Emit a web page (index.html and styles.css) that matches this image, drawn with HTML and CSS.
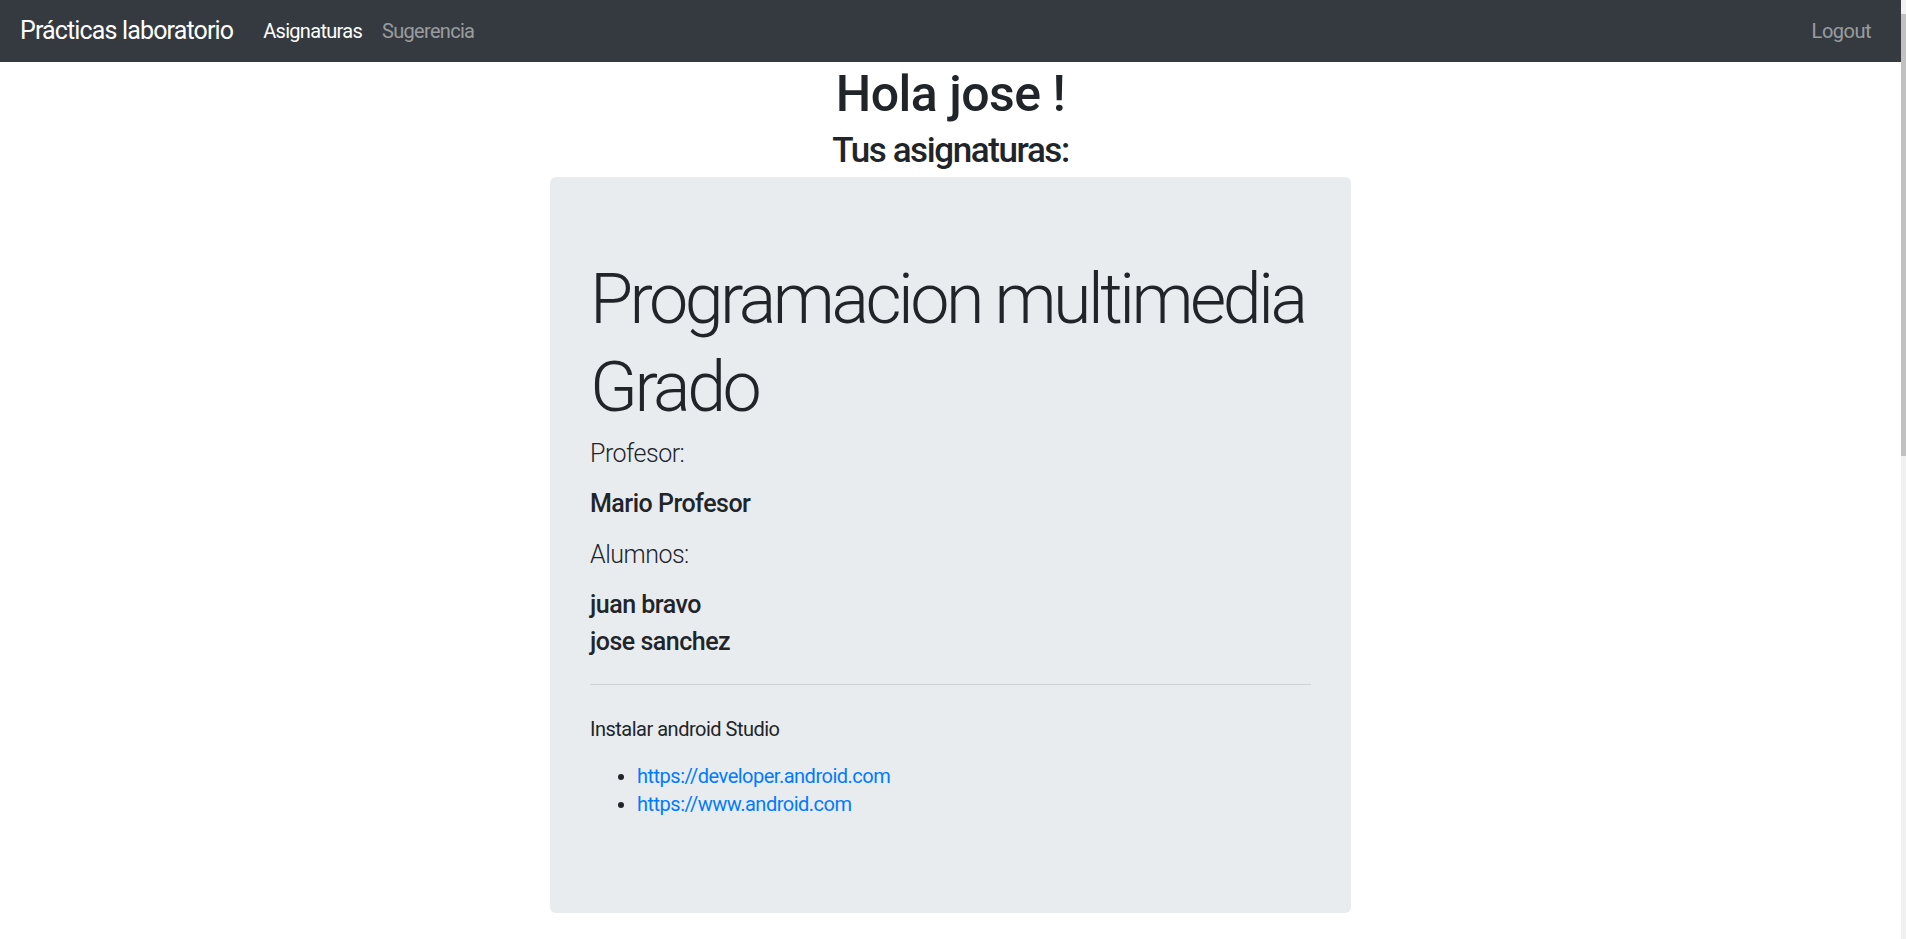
FILE: index.html
```html
<!DOCTYPE html>
<html lang="es">
<head>
<meta charset="utf-8">
<title>Prácticas laboratorio</title>
<link rel="stylesheet" href="styles.css">
</head>
<body>
<div class="app">
  <div class="viewport">
    <nav class="navbar">
      <a class="brand" href="#">Prácticas laboratorio</a>
      <ul class="nav">
        <li><a class="nav-link active" href="#">Asignaturas</a></li>
        <li><a class="nav-link" href="#">Sugerencia</a></li>
      </ul>
      <a class="nav-link logout" href="#">Logout</a>
    </nav>
    <main class="content">
      <h1 class="greeting">Hola jose !</h1>
      <h3 class="subtitle">Tus asignaturas:</h3>
      <section class="jumbotron">
        <h1 class="display-title">Programacion multimedia Grado</h1>
        <p class="lead lead-first">Profesor:</p>
        <h5 class="teacher">Mario Profesor</h5>
        <p class="lead lead-second">Alumnos:</p>
        <div class="students">
          <h5 class="student">juan bravo</h5>
          <h5 class="student">jose sanchez</h5>
        </div>
        <hr class="divider">
        <p class="task">Instalar android Studio</p>
        <ul class="links">
          <li><a href="#">https://developer.android.com</a></li>
          <li><a href="#">https://www.android.com</a></li>
        </ul>
      </section>
    </main>
  </div>
  <div class="scrollbar"><div class="thumb"></div></div>
</div>
</body>
</html>
```
FILE: styles.css
```css
* { box-sizing: border-box; }

html, body {
  margin: 0;
  padding: 0;
}

body {
  font-family: Roboto, "Noto Sans", "Liberation Sans", sans-serif;
  font-size: 20px;
  line-height: 1.5;
  letter-spacing: -0.025em;
  color: #212529;
  background: #fff;
}

.app {
  display: flex;
  height: 939px;
  overflow: hidden;
}

.viewport {
  flex: 1;
  min-width: 0;
}

.scrollbar {
  width: 5px;
  background: #f1f1f1;
  padding-top: 14px;
}

.thumb {
  height: 442px;
  background: #c1c1c1;
}

/* Navbar */
.navbar {
  display: flex;
  align-items: center;
  height: 62px;
  padding: 0 20px;
  background: #343a40;
}

.brand {
  font-size: 25px;
  line-height: 30px;
  letter-spacing: -0.034em;
  color: #fff;
  text-decoration: none;
  margin-right: 20px;
}

.nav {
  display: flex;
  list-style: none;
  margin: 0;
  padding: 0;
}

.nav-link {
  display: block;
  padding: 0 10px;
  font-size: 20px;
  line-height: 30px;
  letter-spacing: -0.035em;
  color: rgba(255, 255, 255, 0.5);
  text-decoration: none;
}

.nav-link.active {
  color: #fff;
}

.logout {
  margin-left: auto;
  letter-spacing: -0.025em;
}

/* Content */
.content {
  text-align: center;
}

.greeting {
  margin: 2px 0 0;
  font-size: 50px;
  font-weight: 500;
  line-height: 60px;
}

.subtitle {
  margin: 6px 0 0;
  font-size: 35px;
  font-weight: 500;
  line-height: 42px;
  letter-spacing: -0.04em;
}

.jumbotron {
  width: 801px;
  margin: 5px auto 0;
  padding: 78px 40px 80px;
  background: #e9ecef;
  border-radius: 6px;
  text-align: left;
}

.display-title {
  margin: 0;
  font-size: 70px;
  font-weight: 300;
  line-height: 88px;
  letter-spacing: -0.05em;
}

.lead {
  margin: 0;
  font-size: 25px;
  font-weight: 300;
  line-height: 37.5px;
}

.lead-first { margin-top: 4px; }
.lead-second { margin-top: 17px; }

.teacher {
  margin: 16px 0 0;
  font-size: 25px;
  font-weight: 500;
  line-height: 30px;
}

.students {
  margin-top: 13px;
}

.student {
  margin: 0;
  font-size: 25px;
  font-weight: 500;
  line-height: 37px;
}

.divider {
  margin: 24px 0 0;
  border: 0;
  border-top: 1px solid rgba(0, 0, 0, 0.1);
}

.task {
  margin: 29px 0 0;
  line-height: 30px;
}

.links {
  margin: 18px 0 15px;
  padding-left: 47px;
  line-height: 28px;
}

.links a {
  color: #007bff;
  text-decoration: none;
}
```
